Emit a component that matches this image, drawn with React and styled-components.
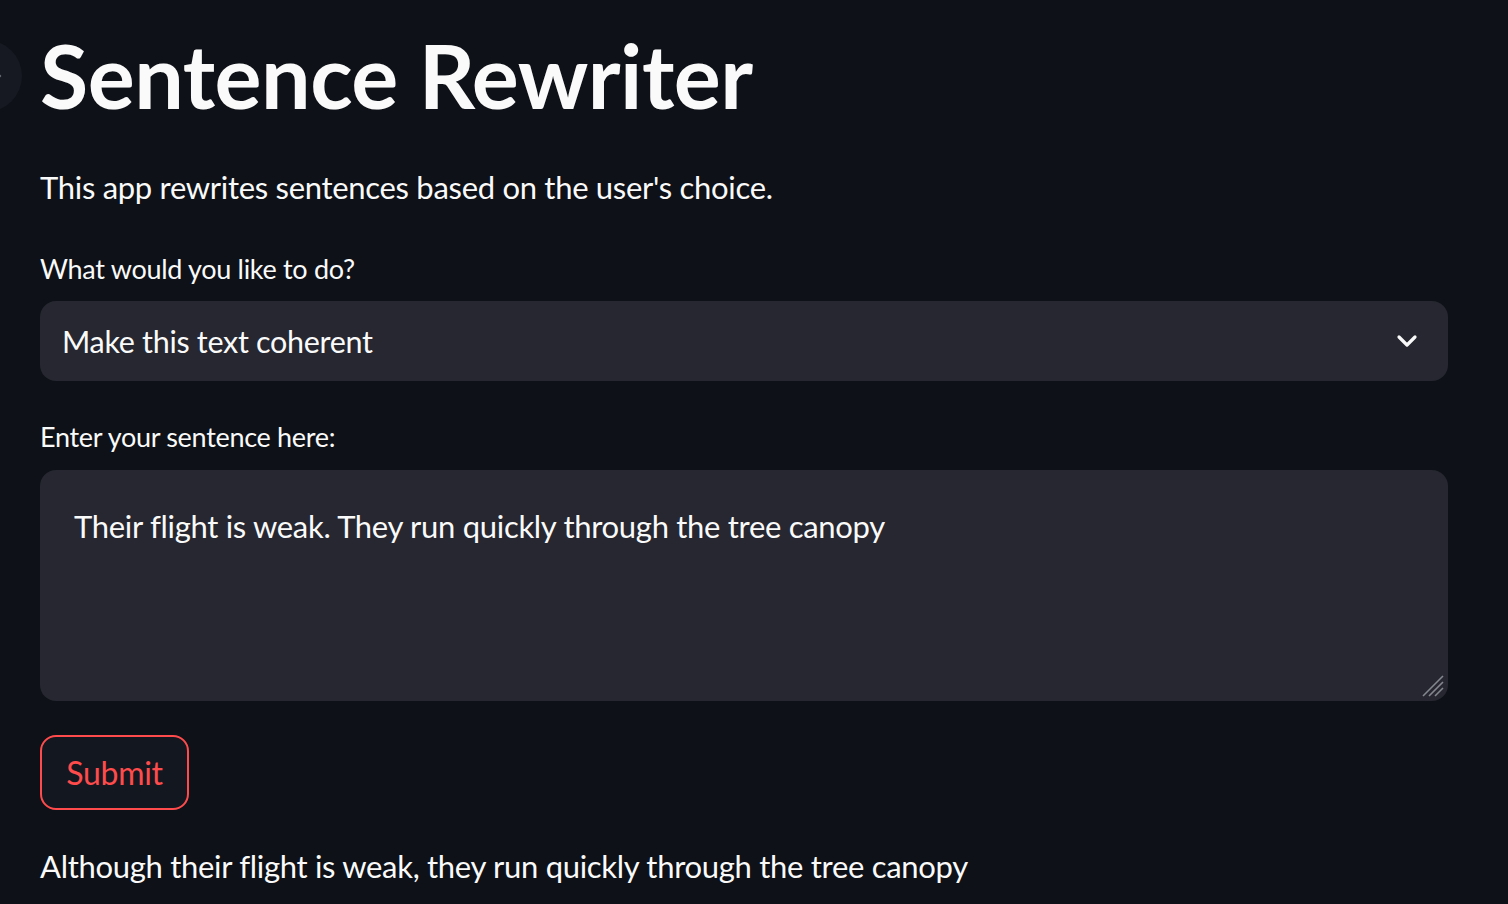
import React from "react";
import styled, { createGlobalStyle } from "styled-components";

const GlobalStyle = createGlobalStyle`
	html, body {
		margin: 0;
		padding: 0;
		background-color: #0e1117;
		font-family: "Lato", "Noto Sans", sans-serif;
		color: #fafafa;
		overflow: hidden;
	}
`;

const Page = styled.div`
	position: relative;
	width: 1508px;
	height: 904px;
	background-color: #0e1117;
	overflow: hidden;
`;

const CollapseButton = styled.div`
	position: absolute;
	left: -50px;
	top: 40px;
	width: 72px;
	height: 72px;
	border-radius: 50%;
	background-color: #161922;
	display: flex;
	align-items: center;
	justify-content: flex-end;
	padding-right: 20px;
	box-sizing: border-box;
`;

const Main = styled.div`
	width: 1408px;
	margin-left: 40px;
	display: flex;
	flex-direction: column;
`;

const Title = styled.h1`
	margin: 23px 0 0 0;
	font-size: 88px;
	font-weight: 700;
	line-height: 1.2;
	letter-spacing: -0.5px;
`;

const Paragraph = styled.p`
	margin: ${(props) => props.top || "0px"} 0 0 0;
	font-size: 31px;
	line-height: 40px;
	letter-spacing: -0.3px;
`;

const Label = styled.label`
	margin-top: ${(props) => props.top || "0px"};
	font-size: 27px;
	line-height: 34px;
	letter-spacing: -0.3px;
`;

const SelectBox = styled.div`
	margin-top: 15px;
	height: 80px;
	border-radius: 16px;
	background-color: #262730;
	display: flex;
	align-items: center;
	justify-content: space-between;
	padding: 0 30px 0 22px;
	box-sizing: border-box;
	font-size: 30.5px;
	letter-spacing: -0.3px;
`;

const TextArea = styled.div`
	position: relative;
	margin-top: 16px;
	height: 231px;
	border-radius: 16px;
	background-color: #262730;
	padding: 36px 34px;
	box-sizing: border-box;
	font-size: 31px;
	line-height: 40px;
	letter-spacing: -0.3px;
`;

const ResizeHandle = styled.svg`
	position: absolute;
	right: 2px;
	bottom: 2px;
`;

const SubmitButton = styled.button`
	margin-top: 34px;
	align-self: flex-start;
	width: 149px;
	height: 75px;
	border: 2px solid #ff4b4b;
	border-radius: 16px;
	background-color: #131720;
	color: #ff4b4b;
	font-family: "Lato", "Noto Sans", sans-serif;
	font-size: 32px;
	letter-spacing: -0.3px;
	padding: 0;
	cursor: pointer;
`;

function Chevron() {
	return (
		<svg width="22" height="14" viewBox="0 0 22 14" fill="none">
			<path
				d="M3 3 L11 11 L19 3"
				stroke="#fafafa"
				strokeWidth="3.2"
				strokeLinecap="round"
				strokeLinejoin="round"
			/>
		</svg>
	);
}

export default function App() {
	return (
		<Page>
			<GlobalStyle />
			<CollapseButton>
				<svg width="8" height="12" viewBox="0 0 8 12">
					<path d="M2 2 L6 6 L2 10" stroke="#6c6f78" strokeWidth="2" fill="none" />
				</svg>
			</CollapseButton>
			<Main>
				<Title>Sentence Rewriter</Title>
				<Paragraph top="38px">
					This app rewrites sentences based on the user's choice.
				</Paragraph>
				<Label top="45px">What would you like to do?</Label>
				<SelectBox>
					<span>Make this text coherent</span>
					<Chevron />
				</SelectBox>
				<Label top="39px">Enter your sentence here:</Label>
				<TextArea>
					Their flight is weak. They run quickly through the tree canopy
					<ResizeHandle width="28" height="28" viewBox="0 0 28 28">
						<path
							d="M25 5 L5 25 M25 11 L11 25 M25 17 L17 25"
							stroke="#85878f"
							strokeWidth="1.6"
						/>
					</ResizeHandle>
				</TextArea>
				<SubmitButton>Submit</SubmitButton>
				<Paragraph top="36px">
					Although their flight is weak, they run quickly through the tree canopy
				</Paragraph>
			</Main>
		</Page>
	);
}
